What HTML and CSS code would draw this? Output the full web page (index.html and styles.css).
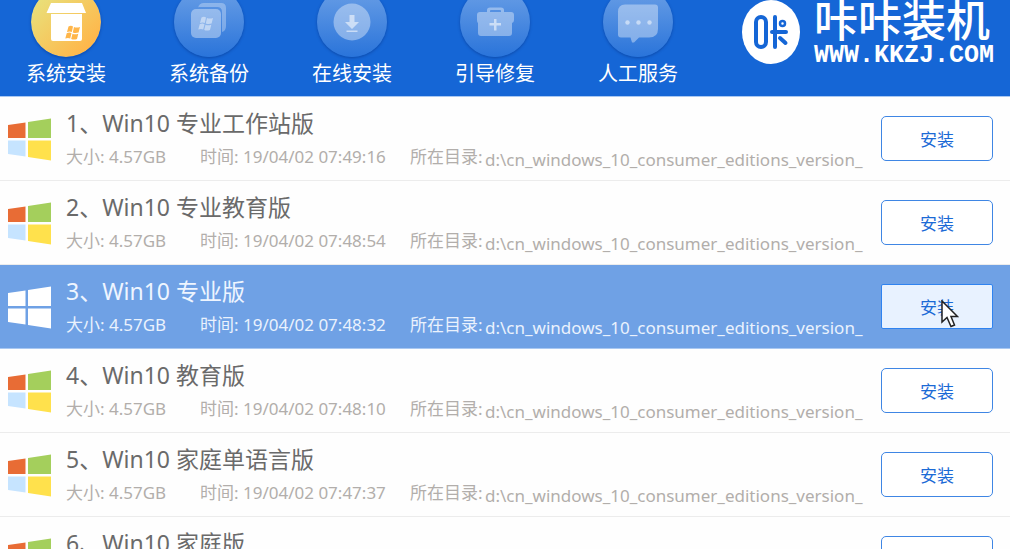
FILE: index.html
```html
<!DOCTYPE html>
<html lang="zh-CN">
<head>
    <meta charset="UTF-8">
    <meta name="viewport" content="width=device-width, initial-scale=1.0">
    <title>咔咔装机</title>
    <link rel="stylesheet" href="styles.css">
</head>
<body>

    <!-- 图标定义 -->
    <svg class="defs" width="0" height="0" aria-hidden="true">
        <linearGradient id="gold" x1="0" y1="0" x2="1" y2="1">
            <stop offset="0.1" stop-color="#e8e27c"/>
            <stop offset="0.85" stop-color="#ffb64a"/>
        </linearGradient>
        <symbol id="win" viewBox="0 0 43 43">
            <path class="p1" d="M0 7 17.500 4.500V20H0z"/>
            <path class="p2" d="M20 4 43 0.500V20H20z"/>
            <path class="p3" d="M0 22.500H17.500V38.500L0 36z"/>
            <path class="p4" d="M20 22.500H43V42.500L20 39z"/>
        </symbol>
        <symbol id="flag" viewBox="0 0 16 16">
            <path d="M3.500 1.500Q6 0 8 1.500L6.800 7Q4.800 5.800 2 7zM9 2Q11.500 3.200 15 2L13.600 7.500Q10.500 8.500 7.800 7.400zM1.700 8.200Q4.500 7 6.500 8.200L5.200 13.500Q3 12.500 0.300 13.500zM7.500 8.700Q10 9.800 13.300 8.700L12 14Q9 15 6.200 14z"/>
        </symbol>
    </svg>

    <!-- 顶部导航 -->
    <header class="header">
        <nav class="nav">
            <a class="nav-item active" href="#">
                <svg class="nav-icon" viewBox="0 0 70 70">
                    <circle cx="35" cy="35" r="35" fill="url(#gold)"/>
                    <path d="M20 16H51L55 26H15.500z" fill="#fff"/>
                    <path d="M20 27H51V52a2 2 0 0 1-2 2H22a2 2 0 0 1-2-2z" fill="#fff"/>
                    <use href="#flag" x="34" y="38" width="16" height="16" fill="#ffb64a"/>
                </svg>
                <span>系统安装</span>
            </a>
            <a class="nav-item" href="#">
                <svg class="nav-icon" viewBox="0 0 70 70">
                    <path d="M24 21Q25 16 30 16H47Q52 16 52 21V39Q52 44 48 45V25Q48 20 43 20H24z" fill="#fff" opacity=".3"/>
                    <rect x="17" y="22" width="30" height="29" rx="5" fill="#fff" opacity=".38"/>
                    <use href="#flag" x="24" y="29" width="16" height="16" fill="#fff" opacity=".45"/>
                </svg>
                <span>系统备份</span>
            </a>
            <a class="nav-item" href="#">
                <svg class="nav-icon" viewBox="0 0 70 70">
                    <circle cx="35" cy="35" r="18.500" fill="#fff" opacity=".38"/>
                    <path d="M32.500 28H37.500V35H42L35 42 28 35H32.500zM29.500 43.500H40.500V45H29.500z" fill="#fff" opacity=".55"/>
                </svg>
                <span>在线安装</span>
            </a>
            <a class="nav-item" href="#">
                <svg class="nav-icon" viewBox="0 0 70 70">
                    <path d="M27 25V23Q27 20.500 30 20.500H41Q44 20.500 44 23V25H51Q54 25 54 28V33Q54 35.500 52 36V46Q52 49 49 49H21Q18 49 18 46V36Q17 35.500 17 33V28Q17 25 20 25zM30 25H41V24Q41 23 40 23H31Q30 23 30 24z" fill="#fff" fill-rule="evenodd" opacity=".38"/>
                    <path d="M34 32H36.500V36H41V38.500H36.500V43.500H34V38.500H29.500V36H34z" fill="#fff" opacity=".55"/>
                </svg>
                <span>引导修复</span>
            </a>
            <a class="nav-item" href="#">
                <svg class="nav-icon" viewBox="0 0 70 70">
                    <path d="M22 17.500H52Q55 17.500 55 20.500V42Q55 50.500 46 50.500H36L31 55.500H29L27.500 50.500H18Q15 50.500 15 47.500V25Q15 17.500 22 17.500z" fill="#fff" opacity=".38"/>
                    <g fill="#fff" opacity=".5">
                        <circle cx="24.500" cy="35.500" r="2.200"/>
                        <circle cx="35.500" cy="35.500" r="2.200"/>
                        <circle cx="46.500" cy="35.500" r="2.200"/>
                    </g>
                </svg>
                <span>人工服务</span>
            </a>
        </nav>
        <div class="brand">
            <svg class="brand-mark" viewBox="0 0 58 64">
                <ellipse cx="29" cy="32" rx="29" ry="32" fill="#fff"/>
                <g fill="none" stroke="#1566d6" stroke-width="4" stroke-linecap="round">
                    <rect x="14" y="17" width="10" height="30" rx="5"/>
                    <path d="M33 17V47M30 32H44M38 38L43.500 43"/>
                    <circle cx="40.500" cy="23.500" r="2.500" stroke-width="2.500"/>
                </g>
            </svg>
            <div class="brand-text">
                <span class="brand-name">咔咔装机</span>
                <span class="brand-url">WWW.KKZJ.COM</span>
            </div>
        </div>
    </header>

    <!-- 系统列表 -->
    <main class="list">
        <div class="row">
            <svg class="win"><use href="#win"/></svg>
            <div class="info">
                <h2>1、Win10 专业工作站版</h2>
                <div class="meta">
                    <span>大小: 4.57GB</span>
                    <span>时间: 19/04/02 07:49:16</span>
                    <span>所在目录:</span>
                    <span class="path">d:\cn_windows_10_consumer_editions_version_</span>
                </div>
            </div>
            <button class="install">安装</button>
        </div>
        <div class="row">
            <svg class="win"><use href="#win"/></svg>
            <div class="info">
                <h2>2、Win10 专业教育版</h2>
                <div class="meta">
                    <span>大小: 4.57GB</span>
                    <span>时间: 19/04/02 07:48:54</span>
                    <span>所在目录:</span>
                    <span class="path">d:\cn_windows_10_consumer_editions_version_</span>
                </div>
            </div>
            <button class="install">安装</button>
        </div>
        <div class="row selected">
            <svg class="win"><use href="#win"/></svg>
            <div class="info">
                <h2>3、Win10 专业版</h2>
                <div class="meta">
                    <span>大小: 4.57GB</span>
                    <span>时间: 19/04/02 07:48:32</span>
                    <span>所在目录:</span>
                    <span class="path">d:\cn_windows_10_consumer_editions_version_</span>
                </div>
            </div>
            <button class="install">安装</button>
            <svg class="cursor" viewBox="0 0 18 28">
                <path d="M1 1V22L6 17.500 10 26.500 13.500 25 10 16.500H16.500z" fill="#fff" stroke="#222" stroke-width="1.500"/>
            </svg>
        </div>
        <div class="row">
            <svg class="win"><use href="#win"/></svg>
            <div class="info">
                <h2>4、Win10 教育版</h2>
                <div class="meta">
                    <span>大小: 4.57GB</span>
                    <span>时间: 19/04/02 07:48:10</span>
                    <span>所在目录:</span>
                    <span class="path">d:\cn_windows_10_consumer_editions_version_</span>
                </div>
            </div>
            <button class="install">安装</button>
        </div>
        <div class="row">
            <svg class="win"><use href="#win"/></svg>
            <div class="info">
                <h2>5、Win10 家庭单语言版</h2>
                <div class="meta">
                    <span>大小: 4.57GB</span>
                    <span>时间: 19/04/02 07:47:37</span>
                    <span>所在目录:</span>
                    <span class="path">d:\cn_windows_10_consumer_editions_version_</span>
                </div>
            </div>
            <button class="install">安装</button>
        </div>
        <div class="row">
            <svg class="win"><use href="#win"/></svg>
            <div class="info">
                <h2>6、Win10 家庭版</h2>
            </div>
            <button class="install">安装</button>
        </div>
    </main>

</body>
</html>
```

FILE: styles.css
```css
* {
    box-sizing: border-box;
}

body {
    margin: 0;
    height: 100vh;
    overflow: hidden;
    background-color: #fefefe;
    font-family: "Noto Sans", "Noto Sans CJK SC", sans-serif;
}

.defs {
    position: absolute;
}

/* 顶部 */
.header {
    display: flex;
    justify-content: space-between;
    align-items: flex-start;
    margin-top: -13px;
    padding: 0 16px 5px 26px;
    background-color: #1566d6;
    border-bottom: 1px solid #a9c8f2;
}

.nav {
    display: flex;
    gap: 63px;
}

.nav-item {
    display: flex;
    flex-direction: column;
    align-items: center;
    width: 80px;
    color: #fff;
    font-size: 20px;
    line-height: 34px;
    text-decoration: none;
    white-space: nowrap;
}

.nav-icon {
    width: 70px;
    height: 70px;
    border-radius: 50%;
    background: linear-gradient(#6a9fe6, #2a74da);
    box-shadow: 0 1px 3px rgba(0, 30, 100, 0.4);
}

.brand {
    display: flex;
    gap: 14px;
    padding-top: 13px;
    color: #fff;
}

.brand-mark {
    width: 58px;
    height: 64px;
}

.brand-text {
    display: flex;
    flex-direction: column;
}

.brand-name {
    font-size: 44px;
    line-height: 40px;
    font-weight: 500;
}

.brand-url {
    font-family: "Liberation Mono", monospace;
    font-size: 25px;
    line-height: 32px;
    font-weight: bold;
}

/* 列表 */
.row {
    position: relative;
    display: flex;
    align-items: flex-start;
    height: 84px;
    padding: 0 17px 0 8px;
    border-bottom: 1px solid #ececec;
    color: #b2aeab;
}

.win {
    flex: none;
    width: 43px;
    height: 43px;
    margin-top: 21px;
}

.p1 { fill: var(--pane, #e86c35); }
.p2 { fill: var(--pane, #a4cf5c); }
.p3 { fill: var(--pane, #c6e4ff); }
.p4 { fill: var(--pane, #ffe14c); }

.info {
    flex: 1;
    padding: 10px 0 0 15px;
    white-space: nowrap;
}

.info h2 {
    margin: 0;
    color: #6a6a6a;
    font-size: 23px;
    line-height: 32px;
    font-weight: normal;
}

.meta {
    display: grid;
    grid-template-columns: 134px 210px 75px auto;
    margin-top: 6px;
    font-size: 17px;
    line-height: 24px;
}

.path {
    padding-top: 3px;
}

.install {
    width: 112px;
    height: 45px;
    margin-top: 19px;
    padding: 0;
    border: 1px solid #3f86e4;
    border-radius: 5px;
    background-color: #fff;
    color: #1b6ad6;
    font-family: inherit;
    font-size: 17px;
}

.selected {
    --pane: #fff;
    background-color: #6fa1e5;
    border-bottom-color: #a9c8f2;
    color: #eaf2fd;
}

.selected h2 {
    color: #eef5ff;
}

.selected .install {
    border-color: #2f83f0;
    border-radius: 2px;
    background-color: #e8f2ff;
}

.cursor {
    position: absolute;
    top: 35px;
    right: 51px;
    width: 18px;
    height: 28px;
}
```
